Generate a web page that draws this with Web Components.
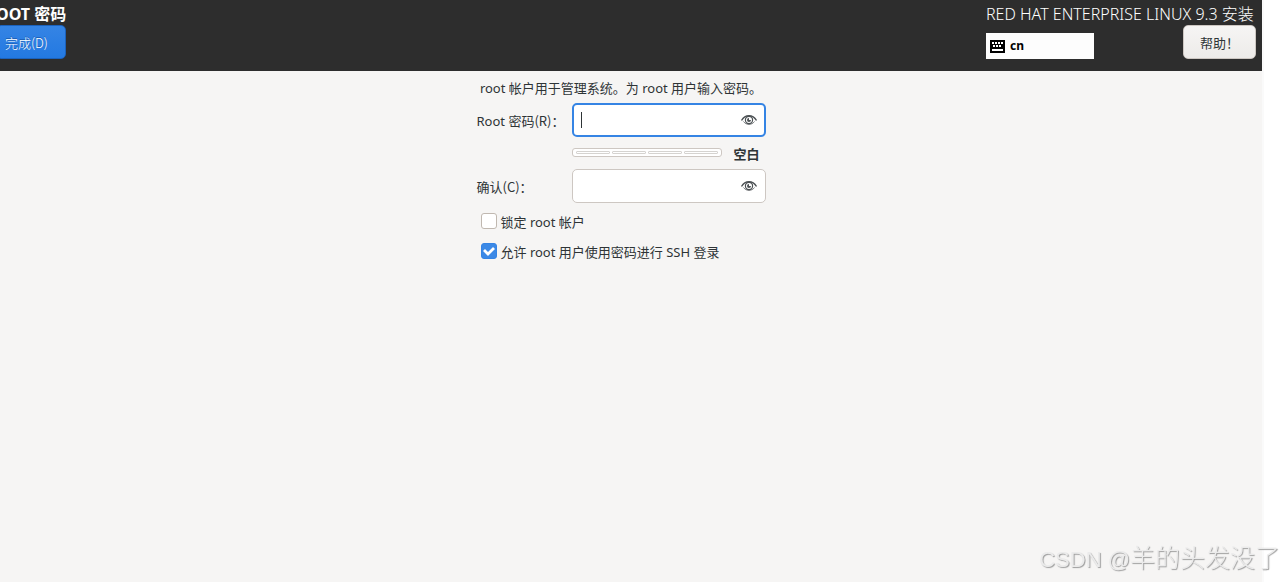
<!DOCTYPE html>
<html lang="zh-CN">
<head>
<meta charset="utf-8">
<title>ROOT 密码</title>
<style>
    html, body {
        height: 100%;
    }

    body {
        margin: 0;
        background: #ffffff;
        color: #2e3436;
        font-family: "Noto Sans", "Noto Sans CJK SC", sans-serif;
        font-size: 13px;
        overflow: hidden;
    }
</style>
</head>
<body>
<installer-window>
    <installer-header slot="header" layout="cn"></installer-header>
    <root-password-form></root-password-form>
</installer-window>
<water-mark prefix="CSDN @">羊的头发没了</water-mark>

<script>
class InstallerWindow extends HTMLElement {
    css = `
    :host {
        display: flex;
        flex-direction: column;
        min-height: 100%;
        margin-right: 21px;
        border-right: 2px solid #fafafa;
        background: #f6f5f4;
    }

    main {
        display: flex;
        justify-content: center;
        padding: 7px 20px 8px 0;
    }
    `

    constructor() {
        super();
        this.attachShadow({ mode: "open" });
        this.shadowRoot.innerHTML = `
        <style>${this.css.trim()}</style>
        <slot name="header"></slot>
        <main><slot></slot></main>
        `
    }
}

class InstallerHeader extends HTMLElement {
    css = `
    :host {
        display: flex;
        justify-content: space-between;
        height: 71px;
        background: #2d2d2d;
        color: #ffffff;
        font-size: 16px;
        line-height: 20px;
    }

    .left, .right {
        display: flex;
        flex-direction: column;
        padding-top: 4px;
        gap: 1px;
    }

    .left {
        align-items: flex-start;
        margin-left: -4px;
    }

    .right {
        min-width: 270px;
        padding-right: 6px;
    }

    h1, h2 {
        margin: 0;
        font-size: 16px;
        white-space: nowrap;
    }

    h2 {
        font-weight: 300;
    }

    button {
        box-sizing: border-box;
        height: 34px;
        padding: 0 16px;
        border: 1px solid #cdc7c2;
        border-radius: 5px;
        background: linear-gradient(#f6f5f4, #edebe9);
        color: #2e3436;
        font: 13px "Noto Sans", "Noto Sans CJK SC", sans-serif;
    }

    .done {
        padding: 0 17px 0 8px;
        border-color: #1b62bd;
        background: linear-gradient(#3584e4, #2379e2);
        color: #ffffff;
        text-shadow: 0 -1px #1b5cb0;
        font-family: "Noto Sans CJK SC", sans-serif;
        font-weight: 300;
    }

    .tools {
        display: flex;
        justify-content: space-between;
    }

    .keyboard {
        box-sizing: border-box;
        display: flex;
        align-items: center;
        gap: 5px;
        width: 108px;
        height: 26px;
        margin-top: 8px;
        padding: 0 4px;
        background: #fdfdfd;
        color: #000000;
        font-size: 12px;
        font-weight: 700;
    }
    `

    template = () => {
        return `
        <div class="left">
            <h1>OOT 密码</h1>
            <button type="button" class="done">完成(D)</button>
        </div>
        <div class="right">
            <h2>RED HAT ENTERPRISE LINUX 9.3 安装</h2>
            <div class="tools">
                <div class="keyboard">
                    <svg width="15" height="13" viewBox="0 0 15 13" shape-rendering="crispEdges" aria-hidden="true">
                        <rect width="15" height="13" rx="1" fill="#000"/>
                        <path fill="#fff" d="M2 2h2v2H2zM5 2h2v2H5zM8 2h2v2H8zM11 2h2v2h-2zM3 5h2v2H3zM6 5h2v2H6zM9 5h2v2H9zM2 9h11v2H2z"/>
                    </svg>
                    <span>${this.getAttribute("layout")}</span>
                </div>
                <button type="button">帮助！</button>
            </div>
        </div>
        `
    }

    constructor() {
        super();
        this.attachShadow({ mode: "open" });
    }

    connectedCallback() {
        this.shadowRoot.innerHTML = `
        <style>${this.css.trim()}</style>
        ${this.template().trim()}
        `
    }
}

class StrengthBar extends HTMLElement {
    css = `
    :host {
        box-sizing: border-box;
        display: flex;
        gap: 2px;
        height: 9px;
        padding: 2px 3px;
        border: 1px solid #cdc7c2;
        border-radius: 3px;
        background: #ffffff;
    }

    .block {
        box-sizing: border-box;
        flex: 1;
        border: 1px solid #d5d3d0;
        border-radius: 1px;
    }
    `

    constructor() {
        super();
        this.attachShadow({ mode: "open" });
        this.shadowRoot.innerHTML = `
        <style>${this.css.trim()}</style>
        ${'<span class="block"></span>'.repeat(4)}
        `
    }
}

class RootPasswordForm extends HTMLElement {
    css = `
    :host {
        display: block;
    }

    form {
        display: grid;
        grid-template-columns: 95px 194px;
    }

    p {
        grid-column: 1 / -1;
        margin: 0 0 5px;
        line-height: 20px;
        text-align: center;
        white-space: nowrap;
    }

    .label {
        padding-top: 2px;
        line-height: 32px;
        white-space: nowrap;
    }

    .cjk {
        font-family: "Noto Sans CJK SC", sans-serif;
    }

    .field {
        position: relative;
    }

    .field input {
        box-sizing: border-box;
        display: block;
        width: 100%;
        height: 34px;
        padding: 0 32px 0 8px;
        border: 1px solid #cdc7c2;
        border-radius: 5px;
        outline: none;
        background: #ffffff;
        font-size: 13px;
        caret-color: transparent;
    }

    .active input {
        border: 2px solid #3584e4;
    }

    .active::before {
        content: "";
        position: absolute;
        left: 9px;
        top: 9px;
        width: 1px;
        height: 16px;
        background: #2e3436;
    }

    .reveal {
        position: absolute;
        right: 9px;
        top: 9px;
        display: block;
        width: 16px;
        height: 16px;
        padding: 0;
        border: none;
        background: none;
        color: #4c5154;
    }

    .reveal svg {
        display: block;
    }

    .strength {
        box-sizing: border-box;
        grid-column: 2;
        display: flex;
        align-items: center;
        gap: 12px;
        height: 32px;
        padding-bottom: 2px;
    }

    strength-bar {
        width: 150px;
    }

    .strength b {
        padding-top: 2px;
    }

    .check {
        grid-column: 1 / -1;
        display: flex;
        align-items: center;
        gap: 4px;
        height: 30px;
        padding-left: 4px;
    }

    .lock {
        margin-top: 3px;
    }

    .check input {
        appearance: none;
        box-sizing: border-box;
        width: 16px;
        height: 16px;
        margin: 0;
        border: 1px solid #c0b8b0;
        border-radius: 3px;
        background: #ffffff;
    }

    .check input:checked {
        border-color: #3584e4;
        background: #3c89e6 url("data:image/svg+xml,%3Csvg xmlns='http://www.w3.org/2000/svg' viewBox='0 0 14 14'%3E%3Cpath d='M2 6l4 4L12 4' fill='none' stroke='white' stroke-width='2.8'/%3E%3C/svg%3E") center / 14px no-repeat;
    }
    `

    field = (id, state) => {
        return `
        <div class="field ${state}">
            <input type="password" id="${id}">
            <button type="button" class="reveal" aria-label="显示密码">
                <svg width="16" height="16" viewBox="0 0 16 16" fill="none" stroke="currentColor" aria-hidden="true">
                    <path d="M0.5 8.5C2.5 5 5 3.7 8 3.7s5.5 1.3 7.5 4.8" stroke-width="1.4"/>
                    <path d="M2.5 9.5C4 11.4 5.7 12.3 8 12.3s4-.9 5.5-2.8" stroke-width="0.8"/>
                    <circle cx="8" cy="8" r="3.6" stroke-width="1.2"/>
                    <path d="M8 6v2h2a2 2 0 1 1-2-2z" fill="currentColor" stroke="none"/>
                </svg>
            </button>
        </div>
        `
    }

    template = () => {
        return `
        <form>
            <p>root 帐户用于管理系统。为 root 用户输入密码。</p>
            <label class="label" for="password">Root <span class="cjk">密码(R)：</span></label>
            ${this.field("password", "active")}
            <div class="strength">
                <strength-bar></strength-bar>
                <b>空白</b>
            </div>
            <label class="label" for="confirm"><span class="cjk">确认(C)：</span></label>
            ${this.field("confirm", "")}
            <div class="check lock">
                <input type="checkbox" id="lock">
                <label for="lock">锁定 root 帐户</label>
            </div>
            <div class="check">
                <input type="checkbox" id="ssh" checked>
                <label for="ssh">允许 root 用户使用密码进行 SSH 登录</label>
            </div>
        </form>
        `
    }

    constructor() {
        super();
        this.attachShadow({ mode: "open" });
        this.shadowRoot.innerHTML = `
        <style>${this.css.trim()}</style>
        ${this.template().trim()}
        `
        this.shadowRoot.querySelectorAll(".reveal").forEach((button) => {
            button.addEventListener("click", this.toggle);
        });
    }

    toggle = (event) => {
        const input = event.currentTarget.previousElementSibling;
        input.type = input.type === "password" ? "text" : "password";
    }
}

class WaterMark extends HTMLElement {
    css = `
    :host {
        position: fixed;
        right: 5px;
        bottom: 4px;
        color: #ebebeb;
        font-family: "Liberation Sans", "Noto Sans CJK SC", sans-serif;
        font-size: 25px;
        font-weight: 300;
        line-height: 36px;
        white-space: nowrap;
        text-shadow: 1px 1px 1px #9c9c9c;
        pointer-events: none;
    }

    .prefix {
        font-size: 22px;
    }
    `

    constructor() {
        super();
        this.attachShadow({ mode: "open" });
    }

    connectedCallback() {
        this.shadowRoot.innerHTML = `
        <style>${this.css.trim()}</style>
        <span class="prefix">${this.getAttribute("prefix")}</span><slot></slot>
        `
    }
}

customElements.define('installer-window', InstallerWindow)
customElements.define('installer-header', InstallerHeader)
customElements.define('strength-bar', StrengthBar)
customElements.define('root-password-form', RootPasswordForm)
customElements.define('water-mark', WaterMark)
</script>
</body>
</html>
